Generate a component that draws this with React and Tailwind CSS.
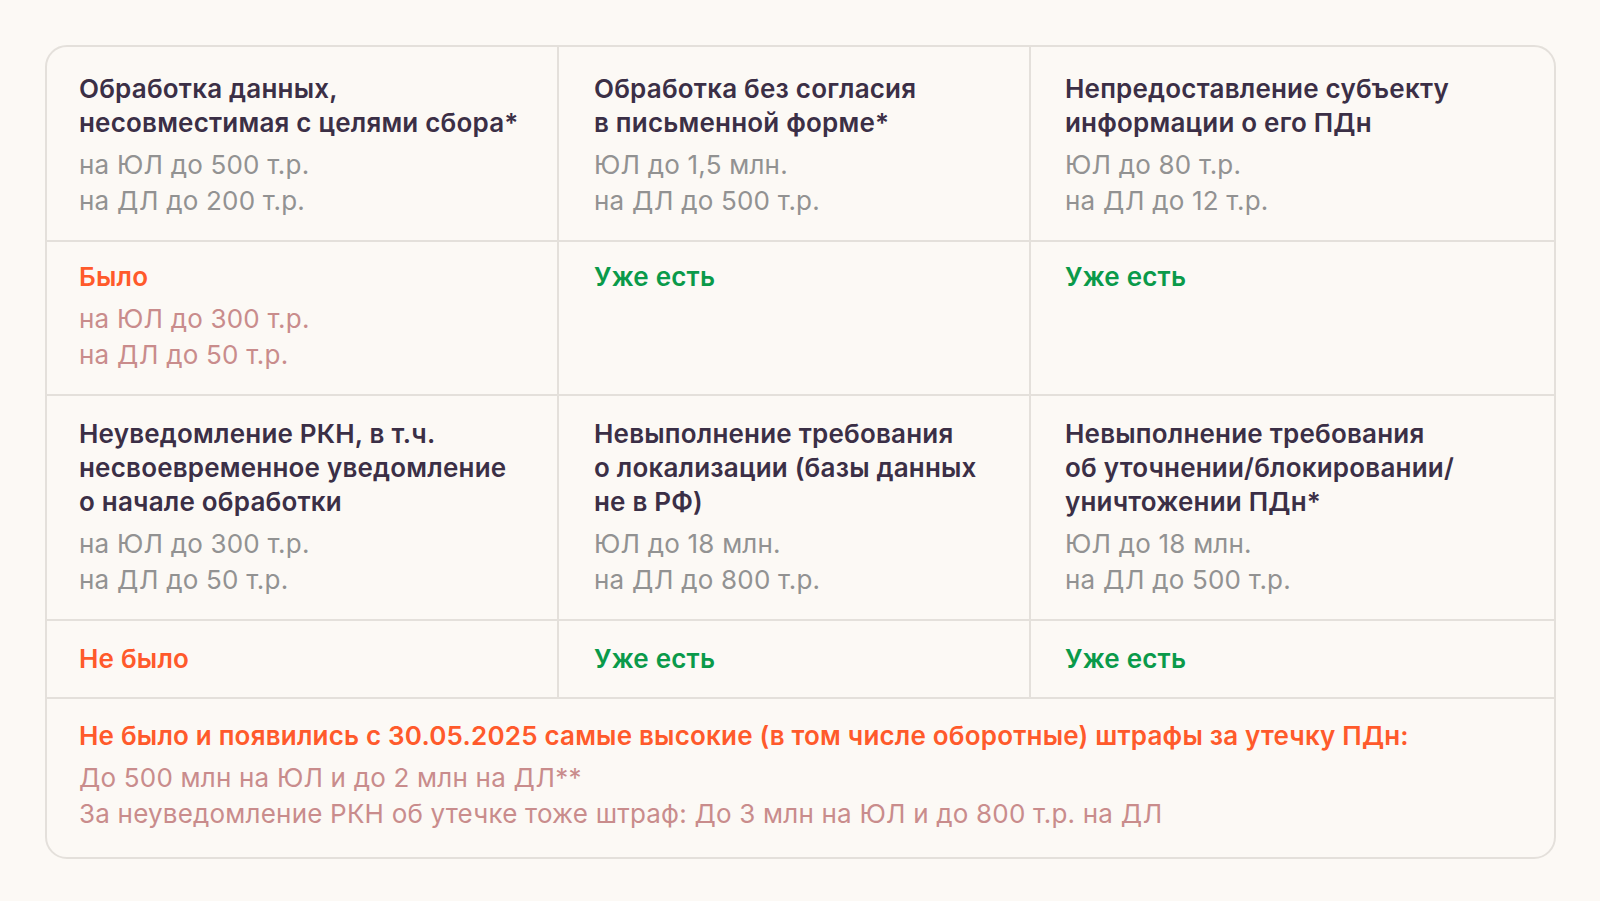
import React from "react";

const TXT = "text-[26px] tracking-[0.2px] ";
const T = ({ children }) => (
  <div className={TXT + "leading-[34px] font-semibold text-[#3b2f46]"}>{children}</div>
);
const H = ({ children, color }) => (
  <div className={TXT + "leading-[34px] font-semibold " + color}>{children}</div>
);
const G = ({ children, pink }) => (
  <div className={TXT + "mt-[7px] leading-[36px] " + (pink ? "text-[#c98c8c]" : "text-[#929292]")}>{children}</div>
);

function Cell({ children, col, pt }) {
  const pl = col === 1 ? "pl-[32px] " : col === 2 ? "pl-[35px] " : "pl-[34px] ";
  return (
    <div
      className={
        pt + " pb-[21px] " + pl + (col === 3 ? "" : "border-r-2 border-[#e4e0db] ")
      }
    >
      {children}
    </div>
  );
}

const ROW = "grid grid-cols-[512px_472px_1fr] ";

export default function App() {
  return (
    <div className="w-[1600px] h-[901px] bg-[#fcf9f5] pt-[45px] pl-[45px]" style={{ fontFamily: "Inter, 'Noto Sans', sans-serif" }}>
      <div className="w-[1511px] border-2 border-[#e4e0db] rounded-[22px] overflow-hidden">
        <div className={ROW}>
          <Cell col={1} pt="pt-[25px]">
            <T>Обработка данных,<br />несовместимая с целями сбора*</T>
            <G>на ЮЛ до 500 т.р.<br />на ДЛ до 200 т.р.</G>
          </Cell>
          <Cell col={2} pt="pt-[25px]">
            <T>Обработка без согласия<br />в письменной форме*</T>
            <G>ЮЛ до 1,5 млн.<br />на ДЛ до 500 т.р.</G>
          </Cell>
          <Cell col={3} pt="pt-[25px]">
            <T>Непредоставление субъекту<br />информации о его ПДн</T>
            <G>ЮЛ до 80 т.р.<br />на ДЛ до 12 т.р.</G>
          </Cell>
        </div>
        <div className={ROW + "border-t-2 border-[#e4e0db]"}>
          <Cell col={1} pt="pt-[18px]">
            <H color="text-[#ff5a2b]">Было</H>
            <G pink>на ЮЛ до 300 т.р.<br />на ДЛ до 50 т.р.</G>
          </Cell>
          <Cell col={2} pt="pt-[18px]">
            <H color="text-[#0a9a4a]">Уже есть</H>
          </Cell>
          <Cell col={3} pt="pt-[18px]">
            <H color="text-[#0a9a4a]">Уже есть</H>
          </Cell>
        </div>
        <div className={ROW + "border-t-2 border-[#e4e0db]"}>
          <Cell col={1} pt="pt-[21px]">
            <T>Неуведомление РКН, в т.ч.<br />несвоевременное уведомление<br />о начале обработки</T>
            <G>на ЮЛ до 300 т.р.<br />на ДЛ до 50 т.р.</G>
          </Cell>
          <Cell col={2} pt="pt-[21px]">
            <T>Невыполнение требования<br />о локализации (базы данных<br />не в РФ)</T>
            <G>ЮЛ до 18 млн.<br />на ДЛ до 800 т.р.</G>
          </Cell>
          <Cell col={3} pt="pt-[21px]">
            <T>Невыполнение требования<br />об уточнении/блокировании/<br />уничтожении ПДн*</T>
            <G>ЮЛ до 18 млн.<br />на ДЛ до 500 т.р.</G>
          </Cell>
        </div>
        <div className={ROW + "border-t-2 border-[#e4e0db]"}>
          <Cell col={1} pt="pt-[21px]">
            <H color="text-[#ff5a2b]">Не было</H>
          </Cell>
          <Cell col={2} pt="pt-[21px]">
            <H color="text-[#0a9a4a]">Уже есть</H>
          </Cell>
          <Cell col={3} pt="pt-[21px]">
            <H color="text-[#0a9a4a]">Уже есть</H>
          </Cell>
        </div>
        <div className="border-t-2 border-[#e4e0db] pt-[20px] pb-[25px] pl-[32px]">
          <H color="text-[#ff5a2b]">
            Не было и появились с 30.05.2025 самые высокие (в том числе оборотные) штрафы за утечку ПДн:
          </H>
          <G pink>
            До 500 млн на ЮЛ и до 2 млн на ДЛ**<br />За неуведомление РКН об утечке тоже штраф: До 3 млн на ЮЛ и до 800 т.р. на ДЛ
          </G>
        </div>
      </div>
    </div>
  );
}
